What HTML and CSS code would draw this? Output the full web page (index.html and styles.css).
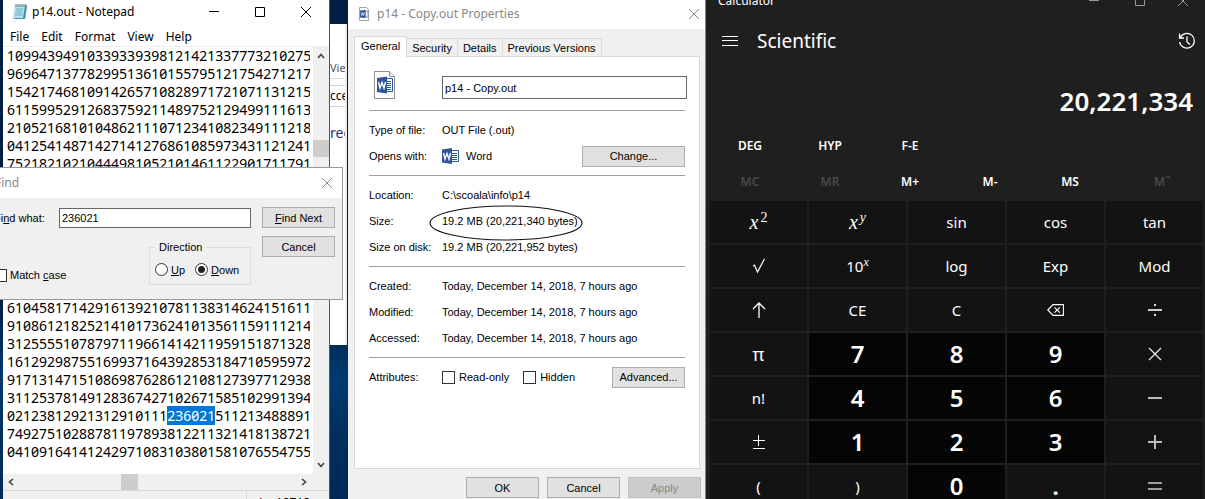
FILE: index.html
```html
<!DOCTYPE html>
<html lang="en">
<head>
<meta charset="utf-8">
<title>Desktop</title>
<link rel="stylesheet" href="styles.css">
</head>
<body>
<main class="desktop">
  <section class="notepad" aria-label="Notepad">
    <header class="np-title">
      <svg class="np-icon" viewBox="0 0 16 18" width="16" height="18" aria-hidden="true"><path d="M3 2h12l-2 14H1z" fill="#8ecbdc"/><path d="M3 2h10l-2 13H1z" fill="#b9e2ec"/><path d="M13 3l2 0-2 13H3l0-1h8z" fill="#4b8fa3"/><path d="M4 6h7M4 8h7M3 10h7M3 12h7" stroke="#6fb2c6"/><path d="M4 1v3M6 1v3M8 1v3M10 1v3M12 1v3M14 1v3" stroke="#6b7f86"/></svg>
      <h1 class="np-name">p14.out - Notepad</h1>
      <button class="cap" aria-label="Minimize"><svg width="12" height="12" viewBox="0 0 12 12"><path d="M1 5.500h10" stroke="#000"/></svg></button>
      <button class="cap" aria-label="Maximize"><svg width="12" height="12" viewBox="0 0 12 12"><path d="M1.500 1.500h9v9h-9z" fill="none" stroke="#000"/></svg></button>
      <button class="cap" aria-label="Close"><svg width="12" height="12" viewBox="0 0 12 12"><path d="M1 1l10 10M11 1L1 11" stroke="#000" fill="none"/></svg></button>
    </header>
    <nav class="np-menu"><button>File</button><button>Edit</button><button>Format</button><button>View</button><button>Help</button></nav>
    <div class="np-body">
<div class="np-pages"><pre class="np-text">10994394910339339398121421337773210275
96964713778299513610155795121754271217
15421746810914265710828971721071131215
61159952912683759211489752129499111613
21052168101048621110712341082349111218
04125414871427141276861085973431121241
75218210210444981052101461122901711791</pre>
<pre class="np-text">61045817142916139210781138314624151611
91086121825214101736241013561159111214
31255551078797119661414211959151871328
16129298755169937164392853184710595972
91713147151086987628612108127397712938
31125378149128367427102671585102991394
02123812921312910111<mark>236021</mark>511213488891
74927510288781197893812211321418138721
04109164141242971083103801581076554755</pre></div>
      <div class="vbar"><svg width="8" height="6" viewBox="0 0 8 6"><path d="M1 5l3-3.500 3 3.500" fill="none" stroke="#444" stroke-width="1.600"/></svg><i class="vthumb"></i><svg width="8" height="6" viewBox="0 0 8 6"><path d="M1 1l3 3.500L7 1" fill="none" stroke="#444" stroke-width="1.600"/></svg></div>
    </div>
    <div class="hbar"><svg width="6" height="8" viewBox="0 0 6 8"><path d="M5 1L1.500 4 5 7" fill="none" stroke="#444" stroke-width="1.600"/></svg><i class="hthumb"></i><svg width="6" height="8" viewBox="0 0 6 8"><path d="M1 1l3.500 3L1 7" fill="none" stroke="#444" stroke-width="1.600"/></svg></div>
    <footer class="np-status"><span>Ln 18718</span></footer>
  </section>

  <section class="explorer" aria-label="File Explorer">
    <div class="ex-tab">View</div>
    <div class="ex-address">cces</div>
    <div class="ex-heading">rec</div>
  </section>

  <section class="props" aria-label="File properties">
    <header class="pr-title">
      <svg width="12" height="14" viewBox="0 0 12 14" aria-hidden="true"><path d="M1.500.5h7l2 2v11h-9z" fill="#fff" stroke="#9aa4b4"/><path d="M7 4h3v6H7z" fill="#fff" stroke="#6f8fc0"/><path d="M2 3.500L7.500 3v8L2 10.500z" fill="#2b579a"/><path d="M3 5.500l.8 3 .9-3 .9 3 .8-3" fill="none" stroke="#fff" stroke-width=".7"/></svg>
      <h2 class="pr-name">p14 - Copy.out Properties</h2>
      <button class="cap small" aria-label="Close"><svg width="12" height="12" viewBox="0 0 12 12"><path d="M1 1l10 10M11 1L1 11" stroke="#888" fill="none"/></svg></button>
    </header>
    <div class="pr-tabs"><button class="on">General</button><button>Security</button><button>Details</button><button>Previous Versions</button></div>
    <div class="pr-panel">
      <div class="pr-file">
        <svg width="22" height="28" viewBox="0 0 22 28" aria-hidden="true"><path d="M.5.5h15l5 5v22H.5z" fill="#fff" stroke="#8c8c8c"/><path d="M15.500.5v5h5" fill="#eee" stroke="#8c8c8c"/><path d="M11 7.500h7.500v13H11z" fill="#fff" stroke="#2b579a"/><path d="M12 10.500h5M12 12.500h5M12 14.500h5M12 16.500h5M12 18.500h5" stroke="#2b579a"/><path d="M3 7L13 5.500v17L3 21z" fill="#2b579a"/><path d="M4.500 11l1.500 6L8 11.500 10 17 11.500 11" fill="none" stroke="#fff" stroke-width="1.400"/></svg>
        <input class="field" aria-label="File name" value="p14 - Copy.out">
      </div>
      <dl class="rows">
        <div><dt>Type of file:</dt><dd>OUT File (.out)</dd></div>
        <div><dt>Opens with:</dt><dd><svg width="18" height="16" viewBox="0 0 18 16" aria-hidden="true"><path d="M9 2.500h7.500v11H9z" fill="#fff" stroke="#2b579a"/><path d="M10 5.500h5M10 7.500h5M10 9.500h5M10 11.500h5" stroke="#2b579a"/><path d="M0 1.500L10 0v16L0 14.500z" fill="#2b579a"/><path d="M1.500 5l1.500 6L5 5.500 7 11 8.500 5" fill="none" stroke="#fff" stroke-width="1.400"/></svg>Word</dd><dd class="end"><button class="btn wide">Change...</button></dd></div>
      </dl>
      <dl class="rows">
        <div><dt>Location:</dt><dd>C:\scoala\info\p14</dd></div>
        <div><dt>Size:</dt><dd class="ringed">19.2 MB (20,221,340 bytes)<svg class="ring" width="154" height="36" viewBox="0 0 154 36" aria-hidden="true"><ellipse cx="77" cy="18" rx="76" ry="17" fill="none" stroke="#111" stroke-width="1.200"/></svg></dd></div>
        <div><dt>Size on disk:</dt><dd>19.2 MB (20,221,952 bytes)</dd></div>
      </dl>
      <dl class="rows">
        <div><dt>Created:</dt><dd>Today, December 14, 2018, 7 hours ago</dd></div>
        <div><dt>Modified:</dt><dd>Today, December 14, 2018, 7 hours ago</dd></div>
        <div><dt>Accessed:</dt><dd>Today, December 14, 2018, 7 hours ago</dd></div>
      </dl>
      <dl class="rows">
        <div><dt>Attributes:</dt><dd class="checks"><label><input type="checkbox" class="check">Read-only</label><label><input type="checkbox" class="check">Hidden</label></dd><dd class="end"><button class="btn">Advanced...</button></dd></div>
      </dl>
    </div>
    <footer class="pr-foot"><button class="btn">OK</button><button class="btn">Cancel</button><button class="btn" disabled>Apply</button></footer>
  </section>

  <section class="calc" aria-label="Calculator">
    <header class="ca-title">
      <span>Calculator</span>
      <button class="cap" aria-label="Minimize"><svg width="12" height="12" viewBox="0 0 12 12"><path d="M1 5.500h10" stroke="#999"/></svg></button>
      <button class="cap" aria-label="Maximize"><svg width="12" height="12" viewBox="0 0 12 12"><path d="M1.500 1.500h9v9h-9z" fill="none" stroke="#999"/></svg></button>
      <button class="cap" aria-label="Close"><svg width="12" height="12" viewBox="0 0 12 12"><path d="M1 1l10 10M11 1L1 11" stroke="#999" fill="none"/></svg></button>
    </header>
    <div class="ca-head">
      <button aria-label="Menu"><svg width="16" height="10" viewBox="0 0 16 10"><path d="M0 .5h16M0 4.500h16M0 9.500h16" stroke="#fff"/></svg></button>
      <h2>Scientific</h2>
      <button aria-label="History"><svg width="18" height="18" viewBox="0 0 18 18"><path d="M1.500 1.500v4.500h4.500M2 6A7.400 7.400 0 1 1 1.600 10M9 4.500V10l3 2.500" fill="none" stroke="#fff" stroke-width="1.300"/></svg></button>
    </div>
    <output class="ca-display">20,221,334</output>
    <div class="ca-modes"><button>DEG</button><button>HYP</button><button>F-E</button></div>
    <div class="ca-modes mem"><button disabled>MC</button><button disabled>MR</button><button>M+</button><button>M-</button><button>MS</button><button disabled>Mˇ</button></div>
    <div class="ca-keys">
      <button class="serif"><i>x</i><sup>2</sup></button><button class="serif"><i>x</i><sup><i>y</i></sup></button><button>sin</button><button>cos</button><button>tan</button>
      <button aria-label="Square root"><svg width="14" height="16" viewBox="0 0 14 16"><path d="M1 8l1.500-.8L5.500 14 12.500.8" fill="none" stroke="#eee" stroke-width="1.300"/></svg></button><button>10<sup class="serif"><i>x</i></sup></button><button>log</button><button>Exp</button><button>Mod</button>
      <button aria-label="More functions"><svg width="14" height="16" viewBox="0 0 14 16"><path d="M7 16V1M1 7l6-6 6 6" fill="none" stroke="#fff" stroke-width="1.300"/></svg></button><button>CE</button><button>C</button><button aria-label="Backspace"><svg width="17" height="12" viewBox="0 0 17 12"><path d="M.8 6L6 .6h10.400v10.800H6z" fill="none" stroke="#fff" stroke-width="1.100"/><path d="M7.500 3.300l5.400 5.400M12.900 3.300L7.500 8.700" stroke="#fff" stroke-width="1.200"/></svg></button><button aria-label="Divide"><svg width="14" height="14" viewBox="0 0 14 14"><path d="M0 7h14" stroke="#ccc" stroke-width="2"/><path d="M6 1h2v2H6zM6 11h2v2H6z" fill="#ddd"/></svg></button>
      <button class="big">π</button><button class="num">7</button><button class="num">8</button><button class="num">9</button><button aria-label="Multiply"><svg width="14" height="14" viewBox="0 0 14 14"><path d="M1 1l12 12M13 1L1 13" stroke="#eee" stroke-width="1.200"/></svg></button>
      <button>n!</button><button class="num">4</button><button class="num">5</button><button class="num">6</button><button aria-label="Subtract"><svg width="14" height="14" viewBox="0 0 14 14"><path d="M0 7h14" stroke="#bbb" stroke-width="2"/></svg></button>
      <button aria-label="Negate"><svg width="12" height="14" viewBox="0 0 12 14"><path d="M0 5.500h12M5.500 0v11M0 13.500h12" stroke="#fff"/></svg></button><button class="num">1</button><button class="num">2</button><button class="num">3</button><button aria-label="Add"><svg width="14" height="14" viewBox="0 0 14 14"><path d="M0 7h14M7 0v14" stroke="#bbb" stroke-width="2"/></svg></button>
      <button>(</button><button>)</button><button class="num">0</button><button class="dot">.</button><button aria-label="Equals"><svg width="14" height="14" viewBox="0 0 14 14"><path d="M0 4h14M0 10h14" stroke="#ccc" stroke-width="1.500"/></svg></button>
    </div>
  </section>

  <section class="find" aria-label="Find">
    <header class="fi-title"><h2>Find</h2><button class="cap small" aria-label="Close"><svg width="12" height="12" viewBox="0 0 12 12"><path d="M1 1l10 10M11 1L1 11" stroke="#888" fill="none"/></svg></button></header>
    <form class="fi-body">
      <div class="fi-main">
        <div class="fi-row"><label for="what"><span>Fi<u>n</u>d what:</span></label><input id="what" class="field" value="236021"></div>
        <div class="fi-opts">
          <label><input type="checkbox" class="check"><span>Match <u>c</u>ase</span></label>
          <fieldset><legend>Direction</legend><label><input type="radio" name="dir" class="radio"><span><u>U</u>p</span></label><label><input type="radio" name="dir" class="radio" checked><span><u>D</u>own</span></label></fieldset>
        </div>
      </div>
      <div class="fi-buttons"><button type="button" class="btn"><u>F</u>ind Next</button><button type="button" class="btn">Cancel</button></div>
    </form>
  </section>
</main>
</body>
</html>
```
FILE: styles.css
```css
* { box-sizing: border-box; }
body, h1, h2, dl, dd, pre { margin: 0; }
body { font: 11px/16px "Liberation Sans", Arial, sans-serif; color: #000; overflow: hidden; }
button, input { font: inherit; color: inherit; }
button { border: 0; background: none; padding: 0; white-space: nowrap; }
svg { display: block; flex: none; }
h1, h2 { font: 12px/16px "Noto Sans", sans-serif; }

.desktop {
  position: relative;
  display: grid;
  grid-template-columns: 330fr 18fr 358fr 499fr;
  height: 100vh;
  overflow: hidden;
  background: linear-gradient(#001e42 0 300px, #003a70 380px, #00305f 430px, #002a55);
}

/* Notepad */
.notepad { display: flex; flex-direction: column; min-width: 0; margin-left: 3px; background: #fff; border-right: 1px solid #555; }
.np-title { display: flex; align-items: center; height: 24px; padding-left: 9px; }
.np-name { flex: 1; margin-left: 4px; white-space: nowrap; }
.cap { display: grid; place-items: center; width: 46px; height: 24px; }
.cap.small { width: 30px; }
.np-menu { display: flex; gap: 12px; height: 22px; padding: 4px 7px 0; font: 12px/18px "Noto Sans", sans-serif; }
.np-body { display: flex; height: 428px; border-top: 1px solid #eee; }
.np-pages { flex: 1; display: grid; gap: 126px; align-content: start; min-width: 0; margin-right: 3px; padding-left: 4px; overflow: hidden; }
.np-text { font: 14px/18px "Noto Sans", sans-serif; font-variant-numeric: tabular-nums slashed-zero; }
.np-text mark { background: #0078d7; color: #fff; }
.vbar { display: grid; grid-template-rows: 87px 17px 1fr; justify-items: center; width: 16px; padding: 6px 0; background: #f0f0f0; }
.vbar svg:last-child { align-self: end; }
.vthumb { width: 100%; background: #cdcdcd; }
.hbar { display: grid; grid-template-columns: 113px 17px 1fr; align-items: center; height: 16px; padding: 0 22px 0 5px; background: #f0f0f0; }
.hbar svg:last-child { justify-self: end; }
.hthumb { height: 100%; background: #cdcdcd; }
.np-status { flex: 1; display: flex; justify-content: flex-end; min-height: 0; background: #f0f0f0; border-top: 1px solid #d7d7d7; overflow: hidden; font: 12px/16px "Noto Sans", sans-serif; }
.np-status span { width: 83px; padding: 4px 12px; border-left: 1px solid #d7d7d7; }

/* Explorer window behind */
.explorer { height: 321px; margin: 24px 3px 0 0; padding-top: 34px; background: #fff; overflow: hidden; font: 12px/20px "Noto Sans", sans-serif; box-shadow: 2px 0 0 #eee; white-space: nowrap; }
.ex-tab { height: 21px; border-bottom: 1px solid #ddd; color: #555; font-size: 11px; }
.ex-address { height: 22px; margin-top: 6px; border: solid #d5d5d5; border-width: 1px 0; }
.ex-heading { margin-top: 16px; font-size: 14px; color: #1e3287; }

/* Properties */
.props { display: flex; flex-direction: column; min-width: 0; background: #f0f0f0; border-right: 1px solid #888; }
.pr-title { display: flex; align-items: center; height: 29px; padding: 0 0 1px 10px; background: #fff; color: #888; }
.pr-name { flex: 1; margin-left: 7px; }
.pr-title .small { width: 22px; }
.pr-tabs { display: flex; align-items: flex-end; height: 27px; padding-left: 6px; }
.pr-tabs button { height: 18px; padding: 0 5px; border: 1px solid #d9d9d9; border-width: 1px 1px 0 0; }
.pr-tabs .on { height: 21px; padding: 0 6px 3px; border-left-width: 1px; background: #fff; margin-bottom: -1px; z-index: 1; }
.pr-panel { height: 413px; margin: 0 5px 0 6px; padding: 14px 14px 0; background: #fff; border: 1px solid #d9d9d9; }
.pr-file { display: grid; grid-template-columns: 68px 1fr; height: 39px; padding-left: 5px; margin-right: -2px; }
.field { min-width: 0; width: 100%; height: 22px; padding: 0 2px; border: 1px solid #666; background: #fff; }
.pr-file .field { margin-top: 5px; height: 23px; }
.rows { padding: 6px 0; border-top: 1px solid #a0a0a0; }
.rows > div { display: flex; align-items: center; height: 26px; white-space: nowrap; }
.rows dt { width: 73px; }
.rows dd { display: flex; align-items: center; gap: 6px; }
.rows .end { margin-left: auto; }
.rows .checks { gap: 14px; }
.ringed { position: relative; }
.ring { position: absolute; left: -13px; top: -8px; }
label { display: flex; align-items: center; white-space: nowrap; }
.check, .radio { appearance: none; flex: none; width: 13px; height: 13px; margin: 0 3px 0 0; border: 1px solid #333; background: #fff; }
.checks .check { margin-right: 4px; }
.radio { border-radius: 50%; }
.radio:checked { background: radial-gradient(circle, #222 0 3px, #fff 4px); }
.btn { width: 73px; height: 21px; border: 1px solid #adadad; background: #e1e1e1; }
.btn.wide { width: 103px; }
.btn:disabled { background: #ccc; border-color: #bfbfbf; color: #888; }
.pr-foot { display: flex; justify-content: flex-end; gap: 8px; padding: 8px 4px 0; }

/* Calculator */
.calc { min-width: 0; padding: 0 2px 0 4px; background: #1f1f1f; color: #fff; font: 12px/16px "Noto Sans", sans-serif; overflow: hidden; }
.ca-title { display: flex; align-items: center; height: 24px; margin: -11px 0 0 8px; }
.ca-title span { flex: 1; }
.ca-title .cap:last-child { width: 40px; }
.ca-head { display: flex; align-items: center; height: 56px; padding: 0 7px 0 12px; }
.ca-head h2 { flex: 1; margin-left: 19px; font-size: 19px; line-height: 24px; }
.ca-display { display: block; padding: 10px 10px 0; text-align: right; font: 600 26px/44px "Noto Sans", sans-serif; }
.ca-modes { display: grid; grid-template-columns: repeat(5, 80fr) 93fr; height: 36px; margin-top: 5px; font-weight: 600; }
.ca-modes.mem { margin-top: 0; }
.ca-modes button:nth-child(6) { padding-left: 12px; }
.ca-modes button:disabled { color: #4a4a4a; }
.ca-keys { display: grid; grid-template-columns: repeat(5, 1fr); grid-auto-rows: 42px; gap: 2px; margin-top: 1px; font-size: 15px; }
.ca-keys button { display: flex; align-items: center; justify-content: center; background: #131313; }
.ca-keys .num { background: #050505; font-size: 24px; font-weight: 600; }
.ca-keys .dot { font-size: 22px; font-weight: 700; }
.ca-keys .big { font-size: 18px; }
.ca-keys sup { font-size: 12px; line-height: 10px; margin-bottom: 8px; }
.ca-keys .serif { font-family: "Liberation Serif", serif; }
.ca-keys button.serif { font-size: 20px; }
.ca-keys button.serif sup { font-size: 14px; margin-left: 2px; }

/* Find dialog floating over Notepad */
.find { position: absolute; left: -14px; top: 167px; width: 357px; border: 1px solid #999; background: #f0f0f0; }
.fi-title { display: flex; align-items: center; justify-content: space-between; height: 30px; padding-left: 8px; background: #fff; color: #888; }
.fi-body { display: flex; gap: 11px; padding: 9px 7px 14px; }
.fi-main { flex: 1; }
.fi-row { display: grid; grid-template-columns: 65px 1fr; align-items: center; padding-top: 1px; }
.fi-row .field { height: 20px; }
.fi-opts { display: flex; justify-content: space-between; align-items: flex-end; margin-top: 11px; }
.fi-opts > label { padding-bottom: 2px; }
fieldset { display: flex; gap: 10px; width: 102px; height: 46px; margin: 0; padding: 0 5px; border: 1px solid #dcdcdc; }
legend { padding: 0 4px; }
.fi-buttons { display: grid; gap: 8px; align-content: start; }
```
